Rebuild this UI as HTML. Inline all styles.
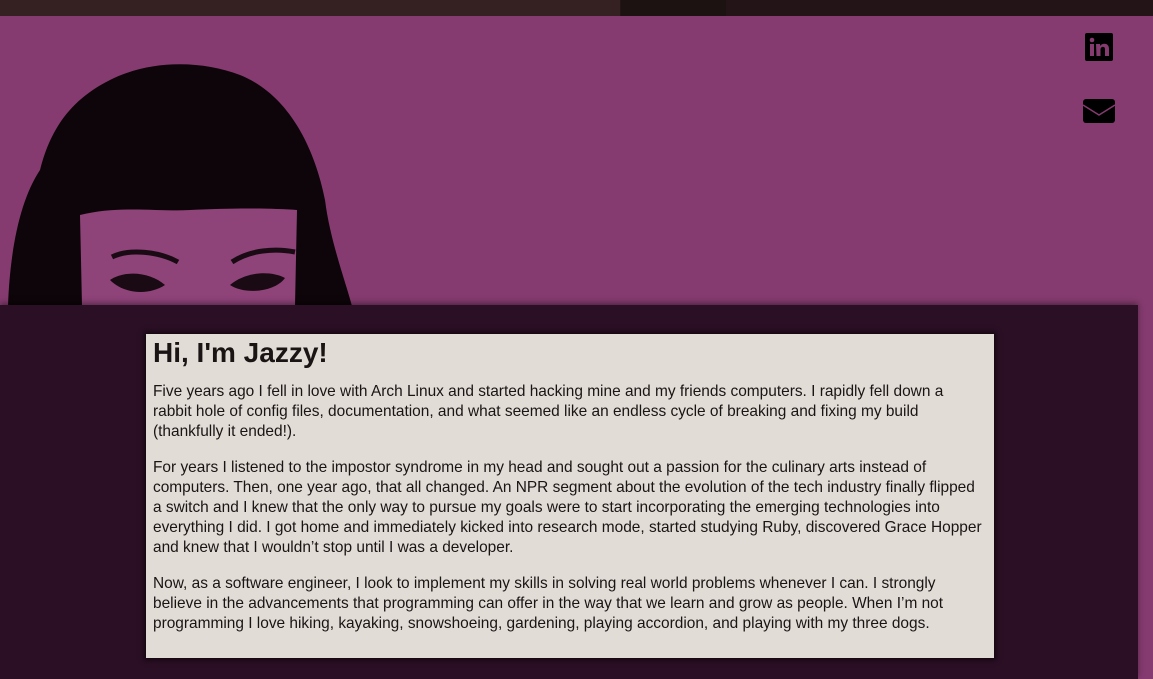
<!DOCTYPE html>
<html><head><style>
body{margin:0;width:1153px;height:679px;overflow:hidden;background:#853b6f;font-family:"Liberation Sans",sans-serif;position:relative}
.top{position:absolute;left:0;top:0;width:1153px;height:16px;background:#231517}
.top .l{position:absolute;left:0;top:0;width:620px;height:16px;background:#352022}
.top .t{position:absolute;left:621px;top:0;width:105px;height:16px;background:#1c1212}
.dark{position:absolute;left:0;top:305px;width:1138px;height:374px;background:#2b0f25;box-shadow:0 -2px 6px rgba(0,0,0,.4)}
.card{position:absolute;left:146px;top:334px;width:834px;height:308px;padding:2px 7px 14px 7px;background:#e1ddd6;box-shadow:0 0 5px 2px rgba(0,0,0,.6);color:#1a1414;font-size:15.45px;line-height:20px;white-space:nowrap}
h1{margin:0 0 12px 0;font-size:28px;line-height:34px}
p{margin:0 0 16px 0}
</style></head><body>
<div class="top"><div class="l"></div><div class="t"></div></div>
<svg style="position:absolute;left:0;top:0" width="400" height="306">
<path d="M8,306 C10,250 20,200 40,170 C50,130 70,100 110,80 C150,60 200,60 240,75 C290,95 315,150 325,200 C330,240 345,280 352,306 Z" fill="#0d0509"/>
<path d="M82,306 L80,215 C120,205 160,212 190,210 C230,208 270,208 297,210 L295,306 Z" fill="#8e4379"/>
<path d="M110,280 C125,270 150,272 165,285 C150,295 125,295 110,280 Z" fill="#1a0a14"/>
<path d="M230,285 C245,272 270,270 285,278 C275,292 245,295 230,285 Z" fill="#1a0a14"/>
<path d="M112,257 C130,248 160,252 178,262" stroke="#1a0a14" stroke-width="5" fill="none"/>
<path d="M232,262 C250,250 275,248 295,252" stroke="#1a0a14" stroke-width="5" fill="none"/>
</svg>
<svg style="position:absolute;left:1085px;top:33px" width="28" height="28" viewBox="0 0 28 28"><rect width="28" height="28" rx="2" fill="#000"/><rect x="5" y="11" width="4" height="12" fill="#853b6f"/><circle cx="7" cy="7" r="2.3" fill="#853b6f"/><path d="M11,11h4v2c1-1.5 2.5-2.3 4.5-2.3c3,0 4.5,2 4.5,5.5V23h-4v-6.5c0-1.7-.6-2.6-2-2.6c-1.5,0-2.5,1-2.5,2.8V23h-4Z" fill="#853b6f"/></svg>
<svg style="position:absolute;left:1083px;top:99px" width="32" height="24" viewBox="0 0 32 24"><rect width="32" height="24" rx="3" fill="#000"/><path d="M0,6 L16,16 L32,6" stroke="#853b6f" stroke-width="1.5" fill="none"/></svg>
<div class="dark"></div>
<div class="card">
<h1>Hi, I'm Jazzy!</h1>
<p>Five years ago I fell in love with Arch Linux and started hacking mine and my friends computers. I rapidly fell down a<br>rabbit hole of config files, documentation, and what seemed like an endless cycle of breaking and fixing my build<br>(thankfully it ended!).</p>
<p>For years I listened to the impostor syndrome in my head and sought out a passion for the culinary arts instead of<br>computers. Then, one year ago, that all changed. An NPR segment about the evolution of the tech industry finally flipped<br>a switch and I knew that the only way to pursue my goals were to start incorporating the emerging technologies into<br>everything I did. I got home and immediately kicked into research mode, started studying Ruby, discovered Grace Hopper<br>and knew that I wouldn’t stop until I was a developer.</p>
<p>Now, as a software engineer, I look to implement my skills in solving real world problems whenever I can. I strongly<br>believe in the advancements that programming can offer in the way that we learn and grow as people. When I’m not<br>programming I love hiking, kayaking, snowshoeing, gardening, playing accordion, and playing with my three dogs.</p>
</div>
</body></html>
